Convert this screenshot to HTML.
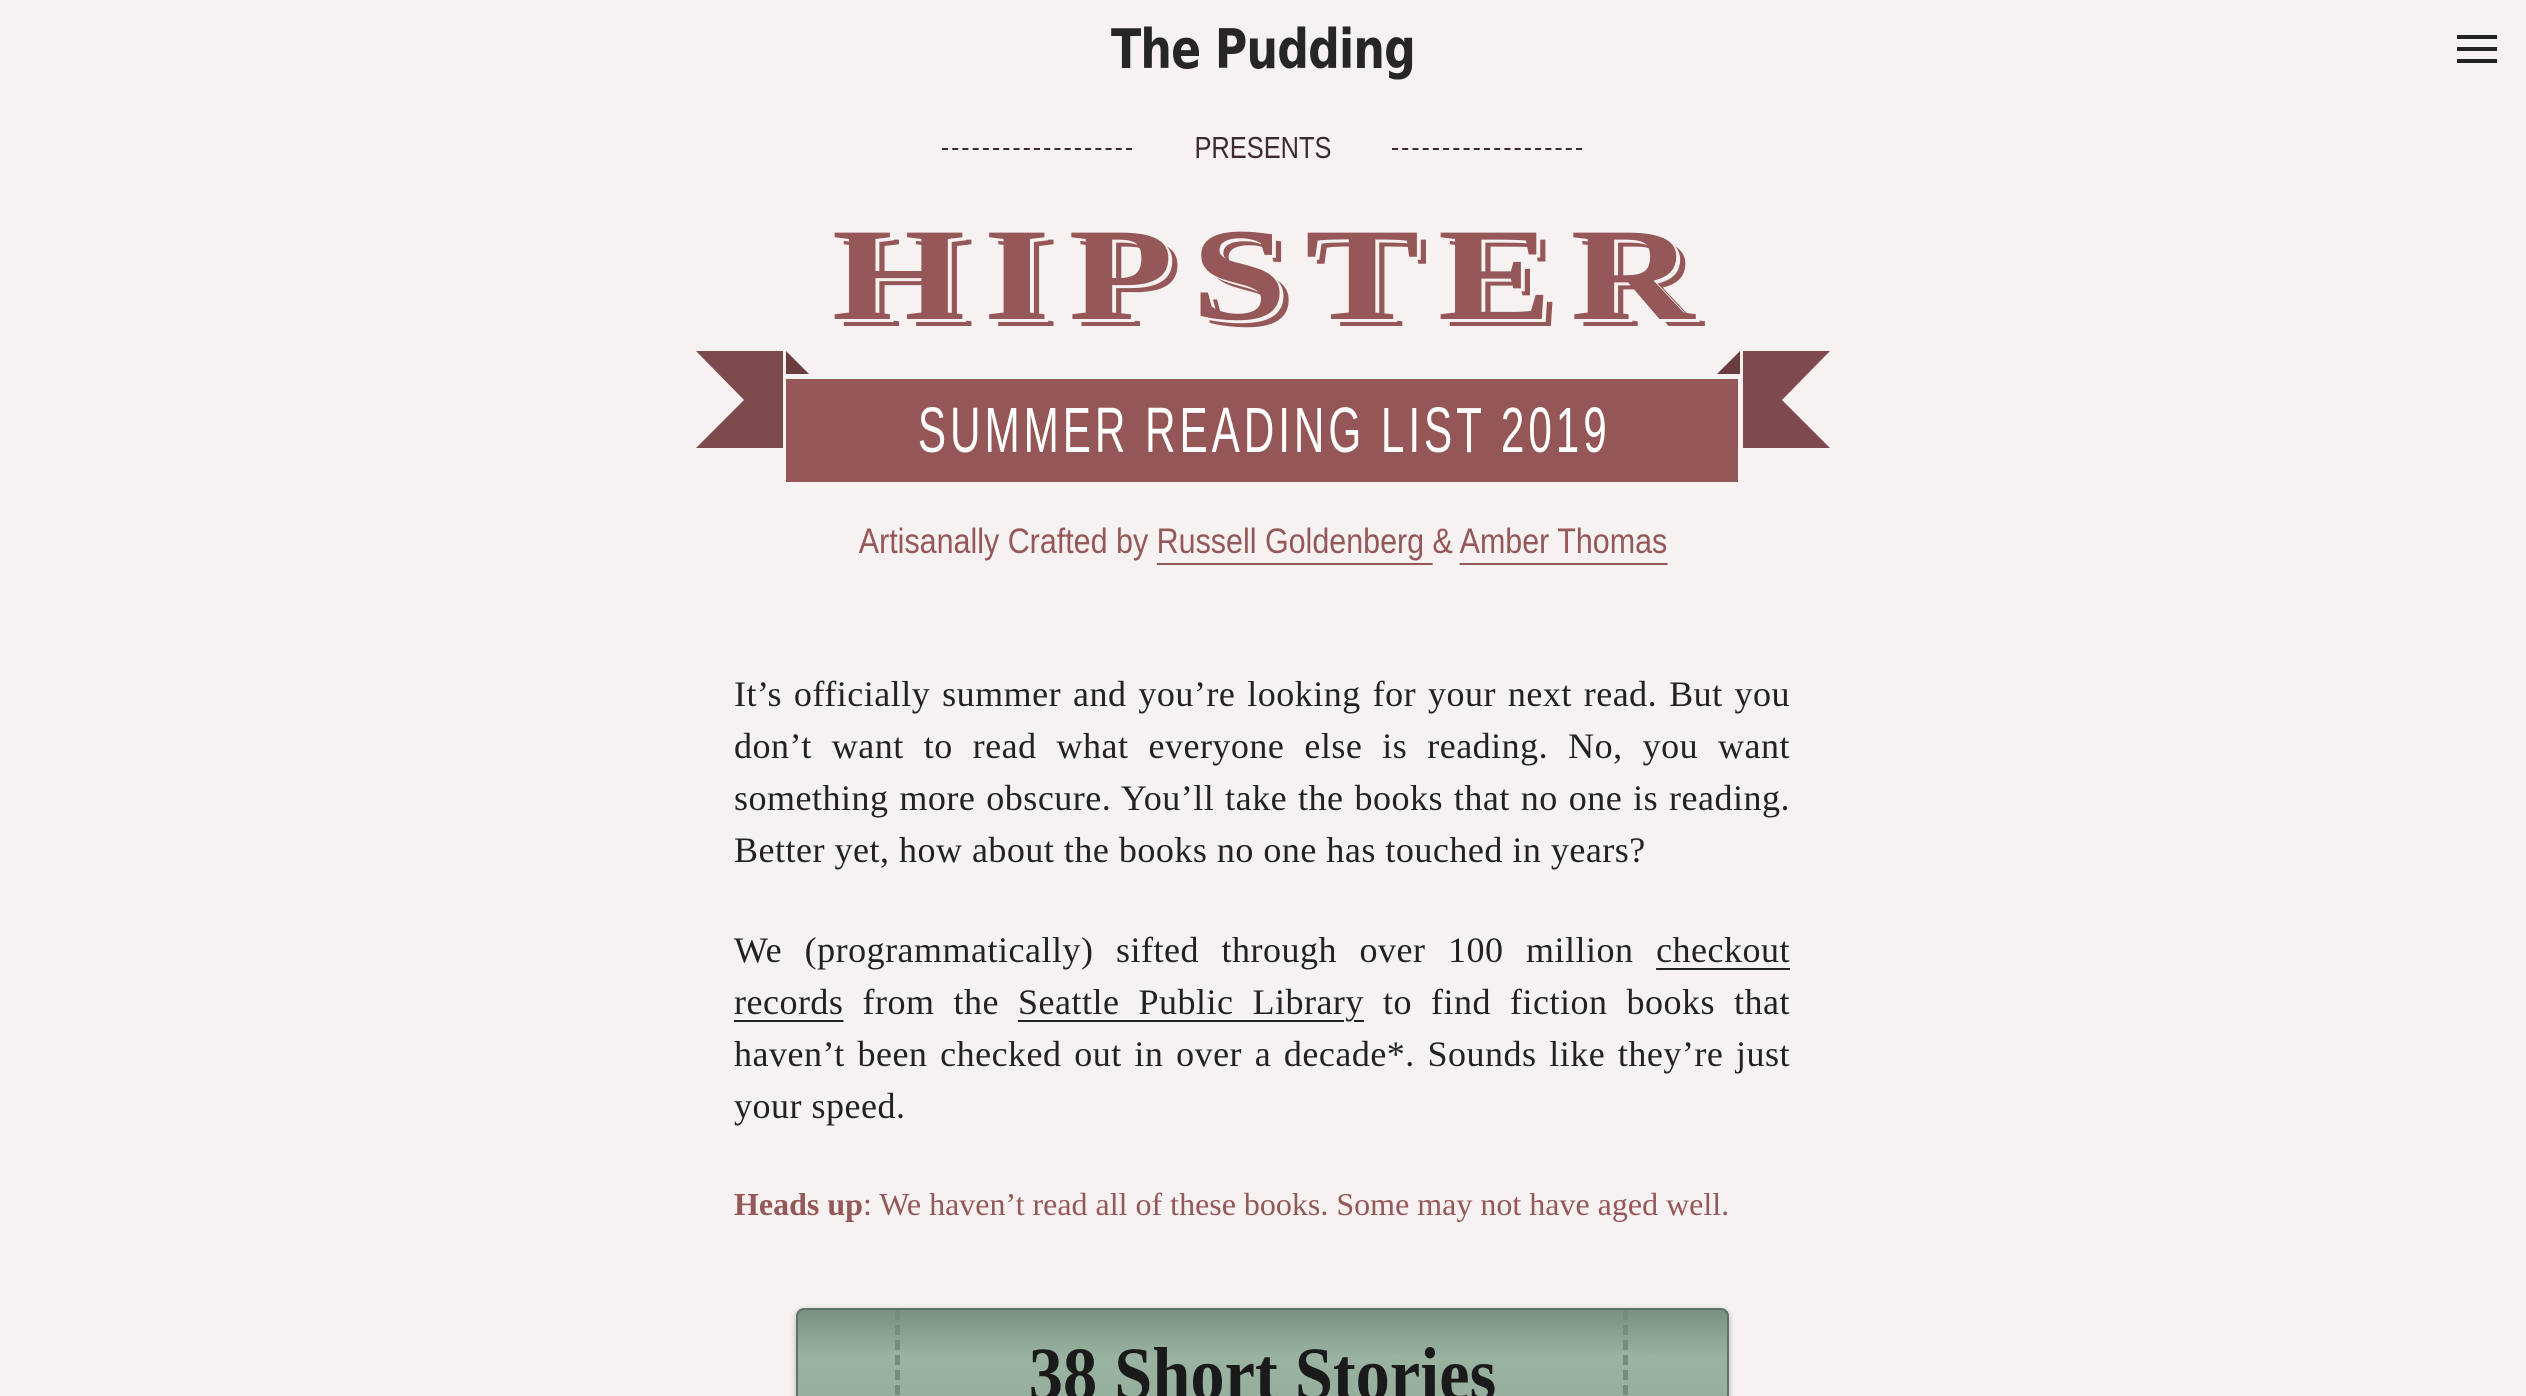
<!DOCTYPE html>
<html><head><meta charset="utf-8"><style>
*{margin:0;padding:0;box-sizing:border-box}
html,body{width:2526px;height:1396px;overflow:hidden;background:#f6f2f1}
body{position:relative;font-family:"Liberation Serif",serif}
.abs{position:absolute}
.logo{left:0;width:2526px;top:18px;text-align:center;font:bold 54px "DejaVu Sans","Liberation Sans",sans-serif;color:#262626;letter-spacing:-1px;transform:scaleX(0.82)}
.ham{left:2457px;width:40px;height:4px;background:#222}
.pres{left:0;width:2526px;top:130px;text-align:center;font:31px "Liberation Sans",sans-serif;color:#3d2a2f;transform:scaleX(0.82)}
.dash{top:148px;width:190px;border-top:2px dashed #3d2a2f}
.hip{left:0;width:2526px;top:210px;text-align:center;font:bold 132px "Liberation Serif",serif;color:#955757;letter-spacing:14px;padding-left:14px;line-height:130px;text-shadow:3px 3px 0 #f6f2f1,7px 7px 0 #955757;transform:scaleX(1.3)}
.band{left:786px;top:379px;width:952px;height:103px;background:#945656}
.btxt{left:756px;width:952px;top:385px;text-align:center;color:#fff;font:64px "Liberation Sans",sans-serif;letter-spacing:6px;line-height:90px;white-space:nowrap;transform:scaleX(0.66)}
.by{left:0;width:2526px;top:522px;text-align:center;font:35px "Liberation Sans",sans-serif;color:#955757;transform:scaleX(0.87)}
.by u{text-decoration:none;border-bottom:2px solid #955757;padding-bottom:2px}
.body{left:734px;width:1056px;font-size:36px;letter-spacing:0.5px;line-height:52px;color:#222;text-align:justify}
.body a{color:#222;text-decoration:underline;text-underline-offset:6px;text-decoration-thickness:2px}
.hu{left:734px;top:1186px;font-size:32px;color:#955757}
.card{left:796px;top:1308px;width:933px;height:120px;border-radius:8px;border:2px solid #5f7466;background:linear-gradient(#7a9080,#9ab3a1 40%,#94ad9b);box-shadow:0 2px 6px rgba(0,0,0,.3)}
.dl{top:1310px;height:100px;border-left:5px dashed #778c7d}
.ct{left:796px;width:933px;top:1332px;text-align:center;font:bold 76px "Liberation Serif",serif;color:#1a1a1a;transform:scaleX(0.9)}
</style></head><body>
<div class="abs logo">The Pudding</div>
<div class="abs ham" style="top:35px"></div><div class="abs ham" style="top:47px"></div><div class="abs ham" style="top:59px"></div>
<div class="abs dash" style="left:942px"></div>
<div class="abs pres">PRESENTS</div>
<div class="abs dash" style="left:1392px"></div>
<div class="abs hip">HIPSTER</div>
<svg class="abs" style="left:0;top:0" width="2526" height="500">
<polygon points="696,351 783,351 783,448 696,448 744,400" fill="#7f4a4b"/>
<polygon points="1830,351 1743,351 1743,448 1830,448 1782,400" fill="#7f4a4b"/>
<polygon points="786,351 786,374 809,374" fill="#6b3d3e"/>
<polygon points="1740,351 1740,374 1717,374" fill="#6b3d3e"/>
</svg>
<div class="abs band"></div>
<div class="abs btxt">SUMMER READING LIST 2019</div>
<div class="abs by">Artisanally Crafted by <u>Russell Goldenberg </u> &amp; <u>Amber Thomas</u></div>
<div class="abs body" style="top:668px">It’s officially summer and you’re looking for your next read. But you don’t want to read what everyone else is reading. No, you want something more obscure. You’ll take the books that no one is reading. Better yet, how about the books no one has touched in years?</div>
<div class="abs body" style="top:924px">We (programmatically) sifted through over 100 million <a>checkout records</a> from the <a>Seattle Public Library</a> to find fiction books that haven’t been checked out in over a decade*. Sounds like they’re just your speed.</div>
<div class="abs hu"><b>Heads up</b>: We haven’t read all of these books. Some may not have aged well.</div>
<div class="abs card"></div>
<div class="abs dl" style="left:895px"></div>
<div class="abs dl" style="left:1623px"></div>
<div class="abs ct">38 Short Stories</div>
</body></html>
